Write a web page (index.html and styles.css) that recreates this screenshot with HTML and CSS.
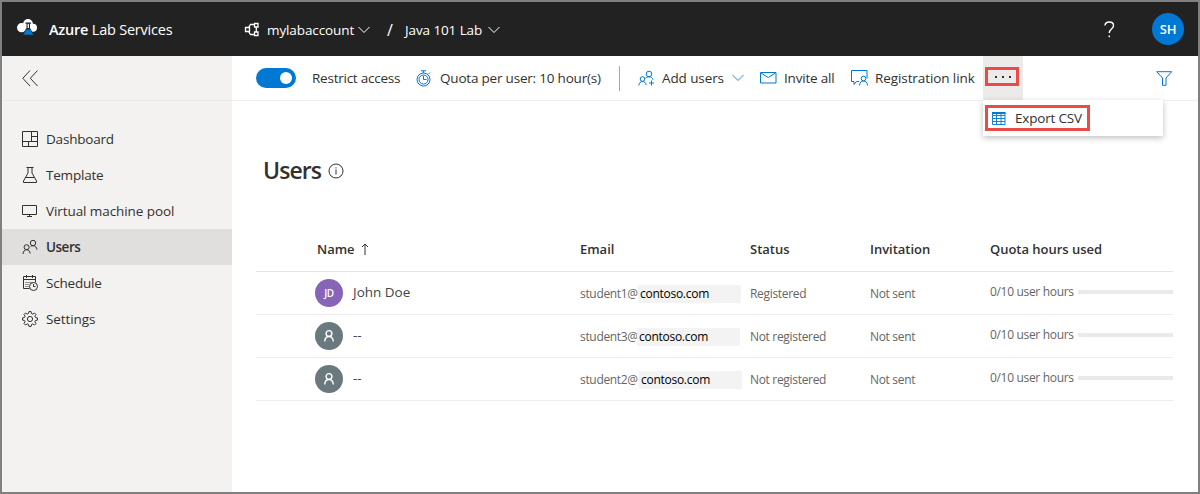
FILE: index.html
```html
<!DOCTYPE html>
<html lang="en">
<head>
<meta charset="utf-8">
<title>Azure Lab Services</title>
<link rel="stylesheet" href="styles.css">
</head>
<body>
<svg class="defs" width="0" height="0">
  <symbol id="people" viewBox="0 0 16 16"><circle cx="4.6" cy="8.2" r="2.5"/><path d="M1 15c.2-2.700 1.600-4.300 3.600-4.300S7.900 12.200 8.200 14.500"/><circle cx="11" cy="4" r="2.700"/><path d="M8.600 7.400c.7-.5 1.500-.7 2.400-.7 2.200 0 3.800 1.700 4 4"/></symbol>
  <symbol id="person" viewBox="0 0 12 14"><circle cx="6" cy="4.500" r="2.900"/><path d="M1.700 12.500c.2-3 1.800-5 4.300-5s4.100 2 4.300 5"/></symbol>
  <symbol id="chevron" viewBox="0 0 12 8"><path d="M.5 1 6 6.500 11.500 1"/></symbol>
</svg>
<div class="app">
  <header class="topbar">
    <div class="brand">
      <svg class="logo" width="20" height="17" viewBox="0 0 20 17"><g fill="#fff"><circle cx="4.600" cy="8.700" r="4.600"/><circle cx="11" cy="5" r="4.900"/><circle cx="16" cy="8.700" r="4"/></g><path d="M9.500 4.500h3.500v4.500l4 7H5.500l4-7z" fill="#222"/><path d="M8.500 3.500H14v1.300H8.500z" fill="#222"/><path d="M10.600 5h1.300v4h-1.300z" fill="#fff"/><path d="M9.300 10.500h4l3 5.200H6.300z" fill="#0078d4"/></svg>
      <span class="brand-name"><b>Azure</b> Lab Services</span>
    </div>
    <nav class="crumbs">
      <svg class="line tree" width="16" height="15" viewBox="0 0 16 15"><path d="M1.500 5.500h4v4h-4zM10.500 1.500h3.500v3.500h-3.500zM10.500 10h3.500v3.500h-3.500zM4.500 5.500 6.500 2.500h4M4.500 9.500l2 3h4M12.300 5v5"/></svg>
      <span class="crumb account">mylabaccount</span>
      <svg class="line" width="12" height="8"><use href="#chevron"/></svg>
      <span class="slash">/</span>
      <span class="crumb lab">Java 101 Lab</span>
      <svg class="line" width="12" height="8"><use href="#chevron"/></svg>
    </nav>
    <svg class="line help" width="11" height="17" viewBox="0 0 11 17"><path d="M1 4.500C1 2.200 2.900 1 5.300 1s4.200 1.300 4.200 3.500C9.500 8 5.300 8 5.300 12M5.300 14.500v1.800" stroke-width="1.400"/></svg>
    <span class="avatar account-avatar">SH</span>
  </header>
  <div class="body">
    <aside class="sidebar">
      <div class="collapse"><svg class="line" width="16" height="17" viewBox="0 0 16 17"><path d="M8 .5 .8 8.300 8 16M15.500.5 8.300 8.300l7.200 7.700"/></svg></div>
      <ul class="nav">
        <li><svg class="line" width="16" height="16" viewBox="0 0 16 16"><path d="M.5.500h15v15H.5zM9.500.500v10M.500 10.500h15M9.500 5.500h6M6.500 10.500v5"/></svg><span>Dashboard</span></li>
        <li><svg class="line" width="16" height="16" viewBox="0 0 16 16"><path d="M4.500.500h7M6 .5v5.500L1.500 14v1.500h13V14L10 6V.5M3.500 10.500h9"/></svg><span>Template</span></li>
        <li><svg class="line" width="16" height="16" viewBox="0 0 16 16"><path d="M.5 2.500h14v9H.5zM7.500 11.500v2M5 13.500h5"/></svg><span class="pool">Virtual machine pool</span></li>
        <li class="active"><svg class="line" width="16" height="16"><use href="#people"/></svg><span>Users</span></li>
        <li><svg class="line" width="16" height="16" viewBox="0 0 16 16"><path d="M7.500 13.500h-6v-12h12v6M1.500 4.500h12M4.500 0v3M10.500 0v3"/><path d="M3.500 7.500h7M3.500 9.500h4M3.500 11.500h4" stroke-dasharray="1 1"/><circle cx="11.500" cy="11.500" r="4"/><path d="M11.500 9v2.500h2"/></svg><span>Schedule</span></li>
        <li><svg class="line" width="16" height="16" viewBox="0 0 16 16"><circle cx="8" cy="8" r="2.600"/><path d="M6.900.6h2.200l.5 2 1.100.5 1.800-1.100 1.500 1.500-1.100 1.800.5 1.100 2 .5v2.200l-2 .5-.5 1.100 1.100 1.800-1.500 1.500-1.800-1.100-1.100.5-.5 2H6.900l-.5-2-1.100-.5L3.500 14 2 12.500l1.100-1.800-.5-1.100-2-.5V6.900l2-.5.5-1.100L2 3.500 3.500 2l1.800 1.100 1.100-.5z"/></svg><span class="pool">Settings</span></li>
      </ul>
    </aside>
    <main class="content">
      <div class="toolbar">
        <span class="toggle"><i></i></span>
        <span class="label w-restrict">Restrict access</span>
        <svg class="line blue" width="16" height="17" viewBox="0 0 16 17"><circle cx="7.500" cy="9.500" r="6.500"/><circle cx="7.500" cy="9.500" r="4.500"/><path d="M5 .8h5M7.500 1v2M7.500 6v3.500h3M12.500 4l1.500-1.500"/></svg>
        <span class="label w-quota">Quota per user: 10 hour(s)</span>
        <span class="divider"></span>
        <svg class="line blue" width="17" height="17" viewBox="0 0 17 17"><circle cx="4.500" cy="9" r="2.300"/><path d="M.8 15.500c.2-2.500 1.600-4 3.700-4s3.300 1.300 3.700 3.500"/><circle cx="11" cy="4" r="2.800"/><path d="M7.500 8.500C8.300 7.300 9.500 6.800 11 6.800c2 0 3.500 1 4 3M13.500 10.500v5M11 13h5"/></svg>
        <span class="label w-add">Add users</span>
        <svg class="line chev" width="12" height="8"><use href="#chevron"/></svg>
        <svg class="line blue mail" width="17" height="12" viewBox="0 0 17 12"><path d="M.5.500h15.500v10.500H.5zM1 1l7.200 4.500L15.500 1"/></svg>
        <span class="label w-invite">Invite all</span>
        <svg class="line blue" width="18" height="16" viewBox="0 0 18 16"><path d="M8 11.500H5.500l-2.500 3v-3H.5V.5h15.500v8"/><circle cx="12.500" cy="8.500" r="2.300"/><path d="M8.500 15.500c.2-3 1.700-4.500 4-4.500s3.800 1.500 4 4.500"/></svg>
        <span class="label w-reg">Registration link</span>
        <div class="more">
          <span class="more-mark"><i></i><i></i><i></i></span>
          <div class="menu"><div class="menu-mark">
            <svg width="14" height="13" viewBox="0 0 14 13"><path d="M.5.500h12.500v12H.5zM.500 3.500H13M.500 6.500H13M.500 9.500H13M4.500 1v11M9 1v11" fill="none" stroke="#1683d8"/><path d="M0 0h13.500v2H0z" fill="#0078d4"/></svg>
            <span>Export CSV</span>
          </div></div>
        </div>
        <svg class="line blue filter" width="17" height="15" viewBox="0 0 17 15"><path d="M.7.700h15L10 7v7.300H6.500V7z"/></svg>
      </div>
      <h1><span>Users</span><svg class="line" width="16" height="16" viewBox="0 0 16 16"><circle cx="8" cy="8" r="7"/><path d="M8 6.500v5M8 4.300v1.200"/></svg></h1>
      <div class="table">
        <div class="row head"><span class="name">Name<svg class="line" width="8" height="12" viewBox="0 0 8 12"><path d="M4 12V1M1 4l3-3 3 3"/></svg></span><span>Email</span><span>Status</span><span>Invitation</span><span>Quota hours used</span></div>
        <div class="row"><span class="name"><span class="avatar jd">JD</span><span class="full-name">John Doe</span></span><span class="email"><span>student1@</span><b class="mask m1">contoso.com</b></span><span>Registered</span><span>Not sent</span><span class="quota"><span>0/10 user hours</span><i></i></span></div>
        <div class="row"><span class="name"><span class="avatar anon"><svg width="12" height="14"><use href="#person"/></svg></span><span class="full-name">--</span></span><span class="email"><span>student3@</span><b class="mask m2">contoso.com</b></span><span>Not registered</span><span>Not sent</span><span class="quota"><span>0/10 user hours</span><i></i></span></div>
        <div class="row"><span class="name"><span class="avatar anon"><svg width="12" height="14"><use href="#person"/></svg></span><span class="full-name">--</span></span><span class="email"><span>student2@</span><b class="mask m3">contoso.com</b></span><span>Not registered</span><span>Not sent</span><span class="quota"><span>0/10 user hours</span><i></i></span></div>
      </div>
    </main>
  </div>
</div>
</body>
</html>
```
FILE: styles.css
```css
* { box-sizing: border-box; }
body { margin: 0; font: 13.5px/20px "Open Sans", "Noto Sans", sans-serif; letter-spacing: -.2px; color: #323130; white-space: nowrap; }
svg { flex: none; display: block; }
.defs { position: absolute; }
.line { fill: none; stroke: currentColor; stroke-width: 1; }
.blue { color: #0078d4; }
.app { width: 1200px; height: 494px; border: 2px solid #808080; display: flex; flex-direction: column; overflow: hidden; background: #fff; }

.topbar { height: 54px; flex: none; background: #222; color: #fff; display: flex; align-items: center; padding-right: 14px; }
.brand { width: 242px; display: flex; align-items: center; padding-left: 15px; }
.logo { margin-bottom: 4px; }
.brand-name { margin-left: 12px; font-size: 14.5px; letter-spacing: -.22px; padding-top: 1px; }
.brand-name b { font-weight: 600; }
.crumbs { display: flex; align-items: center; padding-top: 2px; }
.tree { stroke-width: 1.3; margin-bottom: 2px; }
.crumb { font-weight: 500; letter-spacing: -.1px; }
.account { width: 91px; margin-left: 7px; }
.lab { width: 83px; margin-left: 11px; }
.slash { font-size: 16px; width: 7px; margin-left: 17px; }
.help { margin-left: auto; }
.avatar { flex: none; display: flex; align-items: center; justify-content: center; border-radius: 50%; color: #fff; font-weight: 600; }
.account-avatar { width: 32px; height: 32px; margin-left: 37px; background: #0078d4; font-size: 13px; }

.body { flex: 1; display: flex; }
.sidebar { width: 230px; flex: none; background: #f3f2f0; }
.collapse { height: 45px; border-bottom: 1px solid #eae9e7; padding: 14px 0 0 20px; }
.nav { list-style: none; margin: 20px 0 0; padding: 0; }
.nav li { height: 36px; display: flex; align-items: center; gap: 8px; padding-left: 20px; }
.nav .pool { letter-spacing: -.08px; }
.nav .active { background: #e1dfdd; }
.nav .active span { font-weight: 600; letter-spacing: -.5px; }

.content { flex: 1; }
.toolbar { height: 45px; border-bottom: 1px solid #eee; display: flex; align-items: center; padding-left: 24px; }
.toggle { width: 40px; height: 20px; border-radius: 10px; background: #0078d4; display: flex; align-items: center; justify-content: flex-end; padding-right: 4px; }
.toggle i { width: 12px; height: 12px; border-radius: 50%; background: #fff; }
.label { flex: none; }
.w-restrict { width: 104px; margin-left: 16px; letter-spacing: -.24px; }
.w-quota { width: 179px; margin-left: 8px; letter-spacing: -.2px; }
.divider { width: 1px; height: 25px; background: #a8a6a4; margin-right: 18px; }
.w-add { width: 70px; margin-left: 7px; letter-spacing: -.1px; }
.chev { color: #2b88d8; }
.mail { margin-left: 16px; }
.w-invite { width: 67px; margin-left: 7px; }
.w-reg { width: 108px; margin-left: 6px; letter-spacing: -.09px; }
.more { position: relative; width: 40px; height: 44px; background: #edebe9; padding: 11px 0 0 2px; }
.more-mark { width: 34px; height: 19px; border: 3px solid #e94b48; display: flex; align-items: center; justify-content: center; gap: 5px; padding-left: 2px; }
.more-mark i { width: 2px; height: 2px; background: #323130; }
.menu { position: absolute; top: 44px; left: 0; width: 180px; height: 36px; padding: 5px 0 0 2px; background: #fff; box-shadow: 0 2px 6px rgba(0,0,0,.25); }
.menu-mark { width: 105px; height: 26px; border: 3px solid #e94b48; display: flex; align-items: center; gap: 9px; padding-left: 4px; }
.filter { margin-left: 133px; }

h1 { height: 27px; margin: 56px 0 0 31px; display: flex; align-items: center; gap: 7px; font-size: 23px; line-height: 27px; font-weight: 600; letter-spacing: -.9px; }
.table { width: 917px; margin: 43px 0 0 24px; }
.row { height: 43px; display: grid; grid-template-columns: 324px 170px 120px 120px 183px; align-items: center; border-bottom: 1px solid #eee; font-size: 12px; letter-spacing: -.32px; color: #666; }
.row > span { padding-top: 1px; }
.head { height: 45px; font-size: 13px; letter-spacing: -.02px; font-weight: 600; color: #323130; border-color: #e5e5e5; }
.row.head > span { padding-top: 0; }
.row > .name { display: flex; align-items: center; padding: 0 0 0 59px; font-size: 13.5px; color: #444; }
.row.head > .name { padding-left: 61px; gap: 6px; font-size: 13px; color: #323130; }
.full-name { letter-spacing: 0; padding-bottom: 2px; }
.name .avatar { width: 28px; height: 28px; margin-right: 10px; }
.jd { background: #8764b8; font-size: 10px; }
.anon { background: #69797e; }
.anon svg { fill: none; stroke: #fff; stroke-width: 1.400; }
.email { display: grid; grid-template-columns: 58px 103px; align-items: center; }
.mask { height: 18px; line-height: 17px; padding-left: 2px; background: #f3f3f3; color: #000; font-size: 12px; letter-spacing: -.27px; font-weight: 500; }
.m2 { margin: 0 1px 0 -1px; }
.m3 { margin: 0 -1px 0 1px; }
.row > .quota { display: grid; grid-template-columns: 88px 95px; align-items: center; padding: 0 0 2px; }
.quota i { height: 4px; background: #eaeaea; }
```
